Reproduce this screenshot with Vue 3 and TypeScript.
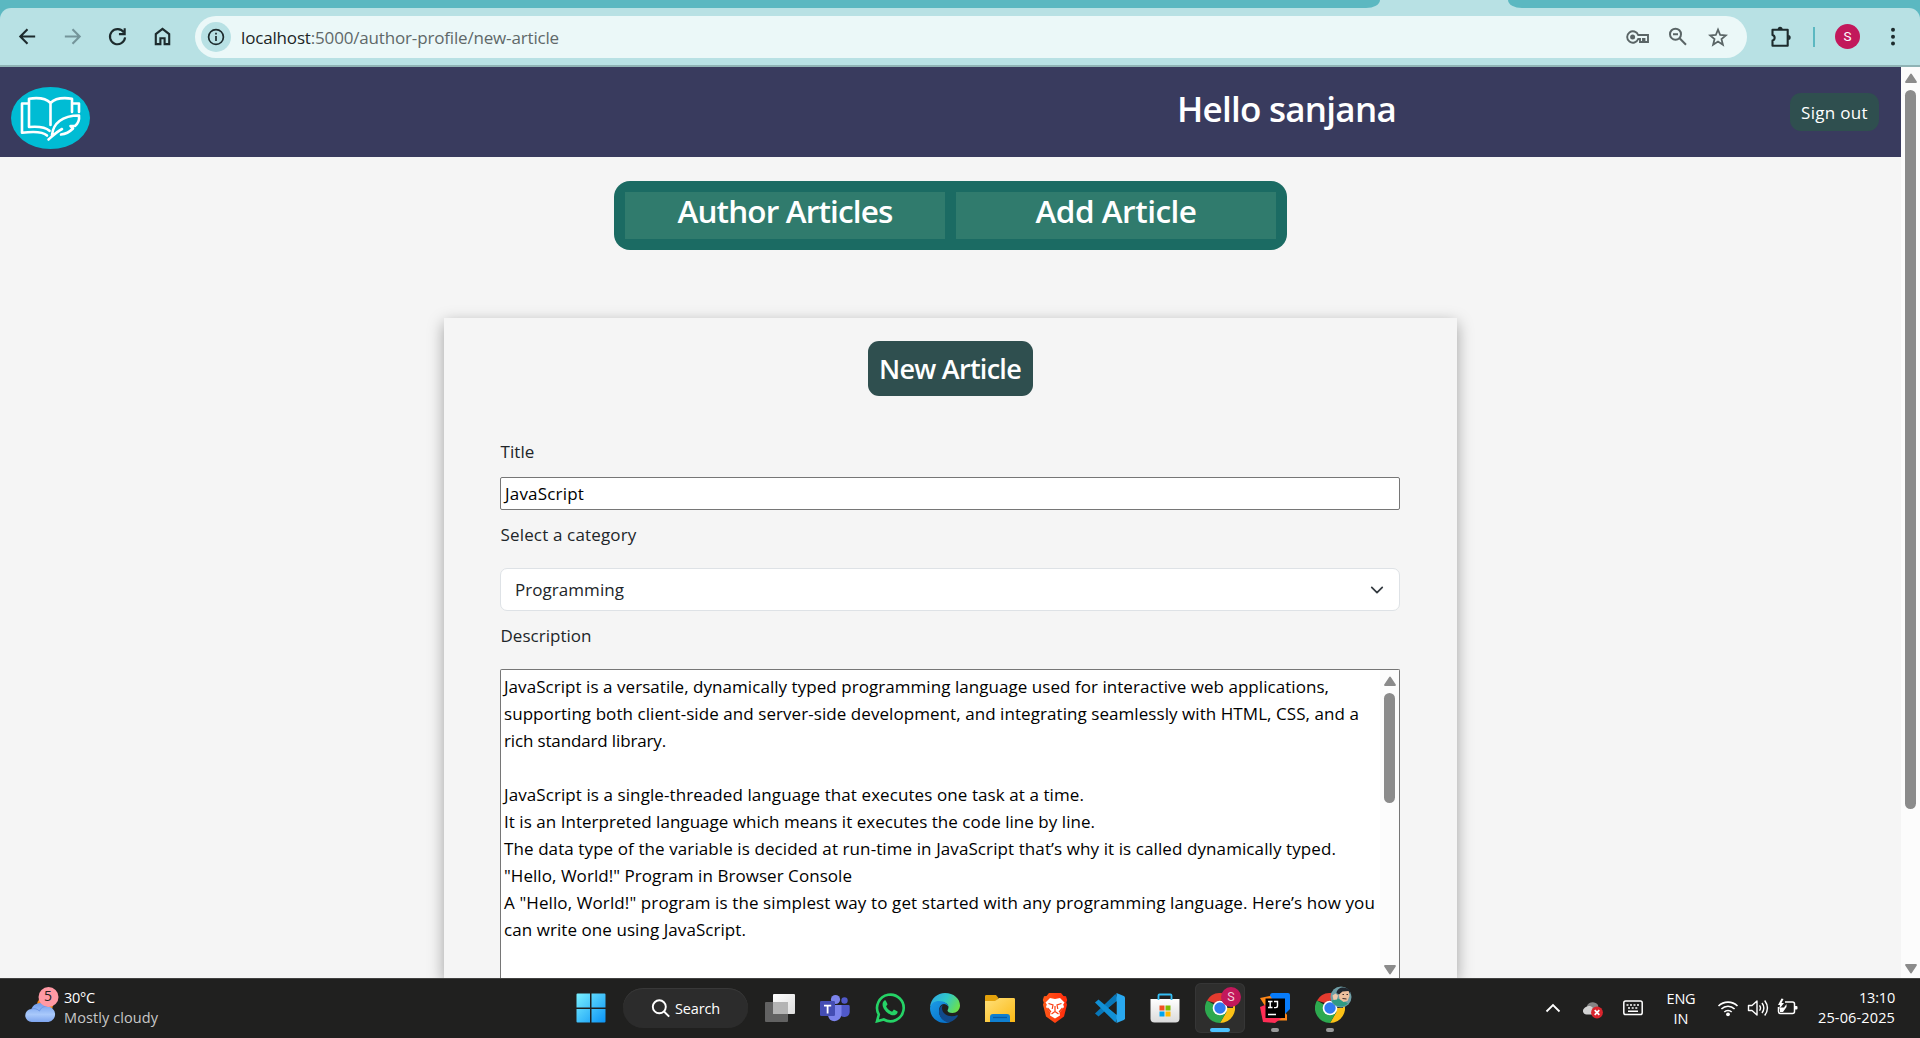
<script setup lang="ts">
import type { Directive } from 'vue'

interface Line {
  text: string
  width: number
}

// Tracks a run of text so that it fills the given width in pixels.
const vFit: Directive<HTMLElement, number> = {
  mounted(el, binding) {
    const count = (el.textContent ?? '').length
    const natural = el.getBoundingClientRect().width
    if (count > 1) el.style.letterSpacing = `${(binding.value - natural) / count}px`
  },
}

const lines: Line[] = [
  { text: 'JavaScript is a versatile, dynamically typed programming language used for interactive web applications,', width: 825 },
  { text: 'supporting both client-side and server-side development, and integrating seamlessly with HTML, CSS, and a', width: 855 },
  { text: 'rich standard library.', width: 162 },
  { text: '', width: 0 },
  { text: 'JavaScript is a single-threaded language that executes one task at a time.', width: 580 },
  { text: 'It is an Interpreted language which means it executes the code line by line.', width: 591 },
  { text: 'The data type of the variable is decided at run-time in JavaScript that’s why it is called dynamically typed.', width: 832 },
  { text: '"Hello, World!" Program in Browser Console', width: 348 },
  { text: 'A "Hello, World!" program is the simplest way to get started with any programming language. Here’s how you', width: 871 },
  { text: 'can write one using JavaScript.', width: 242 },
]
</script>

<template>
  <div class="screen">
    <div class="tabstrip">
      <div class="strip strip-left"></div>
      <div class="strip strip-right"></div>
    </div>

    <div class="toolbar">
      <svg class="nav-icon" viewBox="0 0 24 24"><path d="M20 12H5M12 4.500 4.500 12l7.500 7.500" /></svg>
      <svg class="nav-icon faded" viewBox="0 0 24 24"><path d="M4 12h15M12 4.500 19.500 12 12 19.500" /></svg>
      <svg class="nav-icon" viewBox="0 0 24 24"><path d="M18.600 7.800A7.900 7.900 0 1 0 19.900 13M19.500 3.500V9.500H13.500" /></svg>
      <svg class="nav-icon" viewBox="0 0 24 24"><path d="M5 20V9.500L12 4l7 5.500V20h-4.800v-6.200H9.800V20z" /></svg>
      <div class="omnibox">
        <div class="site-info">
          <svg width="18" height="18" viewBox="0 0 18 18" fill="none" stroke="#1d2b2d" stroke-width="1.700">
            <circle cx="9" cy="9" r="7.400" /><path d="M9 8v5M9 4.800v1.800" />
          </svg>
        </div>
        <span v-fit="318" class="url"><span class="host">localhost</span>:5000/author-profile/new-article</span>
        <div class="omni-icons">
          <svg width="24" height="18" viewBox="0 0 24 18" fill="none" stroke="#5a6566" stroke-width="1.900">
            <path d="M12.200 7H22v7h-3.500v-3h-1.500v3h-3v-3h-1.800A5.700 5.700 0 1 1 12.200 7z" />
            <circle cx="6.600" cy="9" r="2.500" fill="#5a6566" stroke="none" />
          </svg>
          <svg width="20" height="20" viewBox="0 0 20 20" fill="none" stroke="#5a6566" stroke-width="2">
            <circle cx="6.500" cy="7.200" r="5.500" /><path d="M10.600 11.300 17 17.800M4 7.200h5" />
          </svg>
          <svg width="20" height="20" viewBox="0 0 20 20" fill="none" stroke="#5a6566" stroke-width="1.800">
            <path d="m10 2.700 2.200 5.300 5.600.4-4.300 3.700 1.400 5.600-4.900-3.100-4.900 3.100 1.400-5.600L2.200 8.400 7.800 8z" />
          </svg>
        </div>
      </div>
      <svg class="puzzle" width="24" height="24" viewBox="0 0 24 24">
        <path d="M3.500 4.700h15.200v16H3.500v-5.200a2.900 2.900 0 0 0 0-5.600z" fill="none" stroke="#1d2b2d" stroke-width="2.100" stroke-linejoin="round" />
        <path d="M8.600 4.200a2.500 2.500 0 0 1 5 0zM19.200 10a2.500 2.500 0 0 1 0 5z" fill="#1d2b2d" />
      </svg>
      <div class="divider"></div>
      <div class="avatar">S</div>
      <svg class="more" width="6" height="22" viewBox="0 0 6 22" fill="#1d2b2d">
        <circle cx="3" cy="3.700" r="2" /><circle cx="3" cy="10.700" r="2" /><circle cx="3" cy="17.500" r="2" />
      </svg>
    </div>

    <div class="viewport">
      <div class="page">
        <header class="header">
          <svg class="logo" width="79" height="62" viewBox="0 0 79 62">
            <ellipse cx="39.500" cy="31" rx="39.500" ry="31" fill="#00bcd4" />
            <g fill="none" stroke="#fff" stroke-width="2.600" stroke-linecap="round" stroke-linejoin="round">
              <path d="M39.500 38V16c-4-4.200-12-5.700-21.500-4.300V40c9-.8 17 .6 20.500 3.800M39.500 16c4-4.200 12-5.700 21.500-4.300V25" />
              <path d="M17.500 16.500H11v29.300c12-1.600 21-1 25 2.700M61.500 16.500H68V25" />
              <path d="M37.500 52.500C43 47.500 45.500 45 51 42M41 48C42 36.500 51 28.500 68 28.500c.5 4-1 8-4 10.500h-4.500l2.500 2.500c-3 3-7 5.500-12 6" />
            </g>
          </svg>
          <h1 class="hello"><span v-fit="219">Hello sanjana</span></h1>
          <button class="sign-out"><span v-fit="67">Sign out</span></button>
        </header>

        <nav class="tabs">
          <a class="tab"><span v-fit="215">Author Articles</span></a>
          <a class="tab"><span v-fit="161">Add Article</span></a>
        </nav>

        <section class="card">
          <h2 class="card-title"><span v-fit="142">New Article</span></h2>
          <label class="label"><span v-fit="34">Title</span></label>
          <div class="input"><span v-fit="79">JavaScript</span></div>
          <label class="label label-category"><span v-fit="136">Select a category</span></label>
          <div class="select">
            <span v-fit="109">Programming</span>
            <svg width="18" height="14" viewBox="0 0 16 16" preserveAspectRatio="xMidYMid meet">
              <path d="m2 5 6 6 6-6" fill="none" stroke="#343a40" stroke-width="2" stroke-linecap="round" stroke-linejoin="round" />
            </svg>
          </div>
          <label class="label label-description"><span v-fit="91">Description</span></label>
          <div class="textarea">
            <div class="content">
              <p v-for="(line, i) in lines" :key="i" class="line"><span v-fit="line.width">{{ line.text }}</span></p>
            </div>
            <div class="inner-bar">
              <svg width="14" height="10" viewBox="0 0 14 10"><path d="M7 1.500 12 9H2z" fill="#8b8b8b" stroke="#8b8b8b" stroke-width="1.800" stroke-linejoin="round" /></svg>
              <div class="inner-thumb"></div>
              <svg class="down" width="14" height="10" viewBox="0 0 14 10"><path d="M7 8.500 12 1H2z" fill="#8b8b8b" stroke="#8b8b8b" stroke-width="1.800" stroke-linejoin="round" /></svg>
            </div>
          </div>
        </section>
      </div>

      <div class="page-bar">
        <svg width="14" height="10" viewBox="0 0 14 10"><path d="M7 1.500 12 9H2z" fill="#8b8b8b" stroke="#8b8b8b" stroke-width="1.800" stroke-linejoin="round" /></svg>
        <div class="page-thumb"></div>
        <svg class="down" width="14" height="10" viewBox="0 0 14 10"><path d="M7 8.500 12 1H2z" fill="#8b8b8b" stroke="#8b8b8b" stroke-width="1.800" stroke-linejoin="round" /></svg>
      </div>
    </div>

    <footer class="taskbar">
      <div class="weather">
        <svg width="36" height="38" viewBox="0 0 36 38">
          <defs>
            <linearGradient id="cloud" x1="0" y1="0" x2="0" y2="1"><stop offset="0" stop-color="#6f9bea" /><stop offset=".6" stop-color="#a9c9fb" /><stop offset="1" stop-color="#7ea5ee" /></linearGradient>
          </defs>
          <circle cx="21" cy="19" r="8" fill="#f58a1d" />
          <path d="M8 36a6.500 6.500 0 0 1-.5-13A9 9 0 0 1 23 20.500 7.800 7.800 0 0 1 24.500 36z" fill="url(#cloud)" />
          <path d="M7.500 23c3-1 6 0 8 2 1-3 4-5 7.500-4.500" fill="none" stroke="#6b95e4" stroke-width="1" />
          <circle cx="24.500" cy="11" r="10" fill="#ff99a4" />
        </svg>
        <span class="weather-count">5</span>
        <div class="weather-text">
          <div class="temp"><span v-fit="31">30°C</span></div>
          <div class="cond"><span v-fit="94">Mostly cloudy</span></div>
        </div>
      </div>

      <div class="apps">
        <div class="app">
          <svg viewBox="0 0 30 30">
            <defs><linearGradient id="win" x1="0" y1="0" x2="1" y2="1"><stop offset="0" stop-color="#7af0ff" /><stop offset="1" stop-color="#0a93f5" /></linearGradient></defs>
            <path d="M1.500.5H14v14H.5v-13a1 1 0 0 1 1-1zM15.500.5h13a1 1 0 0 1 1 1v13h-14zM.5 16H14v13.500H1.500a1 1 0 0 1-1-1zM15.500 16h14v12.500a1 1 0 0 1-1 1h-13z" fill="url(#win)" />
          </svg>
        </div>
        <div class="search">
          <svg width="19" height="19" viewBox="0 0 19 19" fill="none" stroke="#fff" stroke-width="1.900"><circle cx="8.300" cy="7.800" r="6.500" /><path d="m13 12.500 5.200 5.200" /></svg>
          <span v-fit="45">Search</span>
        </div>
        <div class="app">
          <svg viewBox="0 0 30 30">
            <defs><linearGradient id="tv" x1="0" y1="0" x2="1" y2="1"><stop offset="0" stop-color="#fff" /><stop offset="1" stop-color="#dcdcdc" /></linearGradient></defs>
            <rect y="9" width="23" height="20" rx="1" fill="#626262" /><rect x="8" y="1" width="22" height="20" rx="1" fill="url(#tv)" /><path d="M8 9h15v12H8z" fill="#b4b4b4" />
          </svg>
        </div>
        <div class="app">
          <svg viewBox="0 0 30 30">
            <circle cx="24.500" cy="7.500" r="3.200" fill="#5059c9" /><circle cx="15.500" cy="6.500" r="4.600" fill="#7b83eb" />
            <path d="M20 12h8.500a1.200 1.200 0 0 1 1.200 1.200v6A5.500 5.500 0 0 1 20 22z" fill="#5059c9" />
            <path d="M9 12h12.500v9a7.200 7.200 0 0 1-7 7.200C10 28 8 25 8 21z" fill="#7b83eb" />
            <rect y="8" width="15" height="15" rx="1.300" fill="#444db3" /><path d="M4 11.800h7.200v1.700H8.500v7H6.700v-7H4z" fill="#fff" />
          </svg>
        </div>
        <div class="app">
          <svg viewBox="0 0 30 30">
            <path d="M2 28.300 3.800 21.500A13.300 13.300 0 1 1 8.800 26.500z" fill="none" stroke="#25d366" stroke-width="2.600" />
            <path d="M10.800 7.800c-.6-.8-1.300-.6-2 .1-4 4.500 2.500 13.500 9.500 14.400 2.200.2 4.600-1.500 4.300-3.700l-3.700-2-1.800 2.100c-3-1-5-3-6-5.500l1.500-2z" fill="#25d366" />
          </svg>
        </div>
        <div class="app">
          <svg viewBox="0 0 30 30">
            <defs>
              <linearGradient id="edge1" x1="0" y1=".2" x2="1" y2=".6"><stop offset="0" stop-color="#2fa8e6" /><stop offset=".5" stop-color="#30c9c9" /><stop offset="1" stop-color="#6be04c" /></linearGradient>
              <linearGradient id="edge2" x1="0" y1="0" x2=".8" y2="1"><stop offset="0" stop-color="#1c9ce6" /><stop offset="1" stop-color="#0670c9" /></linearGradient>
            </defs>
            <path d="M0 14C.8 5.500 7.500 0 15 0c8.500 0 15 5.500 15 12.500 0 4.500-3.500 7.500-7.500 7.500-3.500 0-5-1.500-5-2.500 0-.8 1-1.300 1-3.500C18.500 10 12 8 7 9.500 3 10.500.5 13 0 14z" fill="url(#edge1)" />
            <path d="M0 15C.5 10.500 4.500 8 9 8c5.500 0 9.500 3 9.500 6 0 0-1.500-3-4.500-3s-5 3-5 7c0 6 5 11 11 11-2 .8-3.500 1-5 1C6.500 30 0 23.500 0 15z" fill="url(#edge2)" />
            <path d="M12.500 12c-2 1.500-3.500 3.500-3.500 6.500 0 6 5 11 10.500 10.800 3.500-1 6.500-3.500 8.300-6.300.3-.7-.3-1-1-.7C20 25 12 21.500 12 15z" fill="#114a8b" />
          </svg>
        </div>
        <div class="app">
          <svg viewBox="0 0 30 30">
            <defs><linearGradient id="fold" x1="0" y1="0" x2="1" y2="1"><stop offset="0" stop-color="#ffe07a" /><stop offset="1" stop-color="#fbb914" /></linearGradient></defs>
            <path d="M0 14V3.300A1.300 1.300 0 0 1 1.300 2H11l2.500 3L10 9z" fill="#e3a10b" /><path d="M0 8h10l4-3h14.700A1.300 1.300 0 0 1 30 6.300V29H0z" fill="url(#fold)" />
            <path d="M5 29v-5a3 3 0 0 1 3-3h14a3 3 0 0 1 3 3v5z" fill="#0f7fd0" /><path d="M8 24.500h14" stroke="#0759a3" stroke-width="1.300" />
          </svg>
        </div>
        <div class="app">
          <svg viewBox="0 0 30 30">
            <defs><linearGradient id="brave" x1="0" x2="1"><stop offset="0" stop-color="#ff5a18" /><stop offset="1" stop-color="#ff2a0b" /></linearGradient></defs>
            <path d="m9 0-2.500 3L4 3.200 2.800 7l.9 2.500-.7 2.300L6 23.500 15 30l9-6.500 3-11.700-.7-2.300.9-2.500L26 3.200 23.500 3 21 0z" fill="url(#brave)" />
            <path d="m10 5-4.500 4.500 1.300 2L6 14l4.500 5.500-.5 3L15 25.500l5-3-.5-3L24 14l-.8-2.500 1.300-2L20 5l-5 1z" fill="#fff" />
            <path d="m8.500 10.500 4.500 1.500-.8 4M21.500 10.500 17 12l.8 4M15 13v5.500m-3.500 2.500 3.500-2.500 3.500 2.500M7.500 15l3.500 4M22.500 15 19 19" fill="none" stroke="#fb3d12" stroke-width="1.200" />
          </svg>
        </div>
        <div class="app">
          <svg viewBox="0 0 30 30">
            <path d="M0 20.500 20.500 1 23 7 3.500 23.500z" fill="#0877b9" /><path d="M0 9.500 3.500 6.500 23 23l-2.500 6.500z" fill="#1190d6" />
            <path d="m21.500 0 7.300 3a2 2 0 0 1 1.200 1.800v20.400a2 2 0 0 1-1.200 1.800l-7.300 3V0z" fill="#29a8ef" /><path d="M21.500 8.500 13.500 15l8 6.500z" fill="#20201f" />
          </svg>
        </div>
        <div class="app">
          <svg viewBox="0 0 30 30">
            <defs><linearGradient id="store" x1="0" y1="0" x2="0" y2="1"><stop offset="0" stop-color="#fff" /><stop offset="1" stop-color="#dadada" /></linearGradient></defs>
            <path d="M.5 6h29v19.500a4 4 0 0 1-4 4h-21a4 4 0 0 1-4-4z" fill="url(#store)" />
            <path d="M8.500 7V2.500a1 1 0 0 1 1-1h11a1 1 0 0 1 1 1V7" fill="none" stroke="#35bdf3" stroke-width="1.800" />
            <path d="M9.500 12.500h5v5h-5z" fill="#f25022" /><path d="M15.500 12.500h5v5h-5z" fill="#7fba00" /><path d="M9.500 18.500h5v5h-5z" fill="#00a4ef" /><path d="M15.500 18.500h5v5h-5z" fill="#ffb900" />
          </svg>
        </div>
        <div class="app active">
          <svg viewBox="0 0 30 30">
            <path d="M15 15h13V7.500A15 15 0 0 1 15 30l6.500-11.200z" fill="#fbc116" /><path d="M15 15 2 7.500A15 15 0 0 0 15 30l6.500-11.200z" fill="#2da94f" />
            <path d="M2 7.500a15 15 0 0 1 26 0H15v4z" fill="#e33b2e" /><circle cx="15" cy="15" r="7.300" fill="#fff" /><circle cx="15" cy="15" r="5.700" fill="#2f7af0" />
          </svg>
          <span class="app-badge">S</span>
          <i class="indicator wide"></i>
        </div>
        <div class="app">
          <svg viewBox="0 0 30 30">
            <path d="m0 5 14-3 13 20v5.500H14z" fill="#ff8717" /><path d="M0 14l3 15 12 1 8-6-13-14z" fill="#ff2d55" /><path d="M10 2.500A2.500 2.500 0 0 1 12.500 0H28a2 2 0 0 1 2 2v14l-7 7z" fill="#087cfa" />
            <path d="M5.500 5.500H25V25H5.500z" fill="#000" /><path d="M8 8.500h4.500M10.200 8.500v6M8 14.500h4.500M14 8.500h3.500v4.300q0 1.800-1.800 1.800H14M8 21.500h8" fill="none" stroke="#fff" stroke-width="1.400" />
          </svg>
          <i class="indicator"></i>
        </div>
        <div class="app">
          <svg viewBox="0 0 30 30">
            <path d="M15 15h13V7.500A15 15 0 0 1 15 30l6.500-11.200z" fill="#fbc116" /><path d="M15 15 2 7.500A15 15 0 0 0 15 30l6.500-11.200z" fill="#2da94f" />
            <path d="M2 7.500a15 15 0 0 1 26 0H15v4z" fill="#e33b2e" /><circle cx="15" cy="15" r="7.300" fill="#fff" /><circle cx="15" cy="15" r="5.700" fill="#2f7af0" />
          </svg>
          <svg class="face" viewBox="0 0 22 22">
            <circle cx="11" cy="11" r="10.500" fill="#6f9ea6" />
            <path d="M1.500 15 6 12l6 2 6 3.500a10.500 10.500 0 0 1-16.500-2.500z" fill="#2f9a83" />
            <path d="M8 5.500 13 4l6 1 .5 5-2 5-4 1-4-3z" fill="#eebf9d" /><path d="M6.500 7C7 1 15-.5 20 4l.5 4.500-2-3.500-6 .5-3.500 3z" fill="#20262e" />
            <path d="m2.500 9.500 3-2 2.500 2-1 4-3.500.5z" fill="#efc8aa" /><path d="m12.500 12.500 4 .5M12.500 8.500h1.500M16.500 8.500H18" stroke="#3b2b2b" />
          </svg>
          <i class="indicator"></i>
        </div>
      </div>

      <div class="tray">
        <svg class="chev" width="16" height="10" viewBox="0 0 16 10" fill="none" stroke="#fff" stroke-width="1.800"><path d="m1.500 8.500 6.500-6.500 6.500 6.500" /></svg>
        <svg class="drive" width="22" height="18" viewBox="0 0 22 18">
          <path d="M5 5C6 1 13-.5 16 4l1 7H6z" fill="#858585" /><path d="M4.500 13.500C1 13 0 9.500 2 7.500 4 5 8 4 10.500 6.500L15 10v3.500z" fill="#d2d2d2" />
          <circle cx="15" cy="11.500" r="5.900" fill="#d9252d" /><path d="m12.700 9.200 4.600 4.600m0-4.600-4.600 4.600" stroke="#fff" stroke-width="1.700" />
        </svg>
        <svg class="kbd" width="20" height="16" viewBox="0 0 20 16" fill="none" stroke="#fff" stroke-width="1.500">
          <rect x=".8" y="1" width="18.400" height="13.500" rx="1.800" /><path d="M3.500 5h2M7 5h2M10.500 5h2M14 5h2M5 8h2M8.700 8h2M12.300 8h2M5 11.300h10" />
        </svg>
        <div class="lang"><div><span v-fit="29">ENG</span></div><div><span v-fit="15">IN</span></div></div>
        <svg class="wifi" width="22" height="18" viewBox="0 0 22 18" fill="none" stroke="#fff" stroke-width="1.600">
          <path d="M1.500 7a13.500 13.500 0 0 1 19 0M4.400 10a9.300 9.300 0 0 1 13.200 0M7.300 13a5.300 5.300 0 0 1 7.400 0" /><circle cx="11" cy="15.300" r="1.900" fill="#fff" stroke="none" />
        </svg>
        <svg class="vol" width="22" height="18" viewBox="0 0 22 18" fill="none" stroke="#fff" stroke-width="1.400" stroke-linejoin="round">
          <path d="M1.500 6.500v5H5l5 4.500V2L5 6.500zM12.500 6.300q2 2.700 0 5.400M15 4q3.700 5 0 10M17.700 1.500q5.500 7.500 0 15" />
        </svg>
        <svg class="bat" width="21" height="18" viewBox="0 0 21 18">
          <path d="M8 4h7.500a2 2 0 0 1 2 2v7.500a2 2 0 0 1-2 2h-12a2 2 0 0 1-2-2V9" fill="none" stroke="#fff" stroke-width="1.500" />
          <path d="M18 8h1.500a1 1 0 0 1 1 1v1.500a1 1 0 0 1-1 1H18zM3 14V9.500h4L9.500 6v3L6 14zM4.500.5 1 7h2l-1 4.500L7 5H4.500l2-4z" fill="#fff" />
        </svg>
        <div class="clock"><div><span v-fit="36">13:10</span></div><div><span v-fit="77">25-06-2025</span></div></div>
      </div>
    </footer>
  </div>
</template>

<style>
body { margin: 0; overflow: hidden; }
</style>

<style scoped>
* { box-sizing: border-box; }
.screen {
  width: 1920px; height: 1038px; overflow: hidden; display: flex; flex-direction: column;
  font-family: "Open Sans", "Noto Sans", sans-serif; font-size: 17px; background: #5bb8c1; color: #212529;
}
.screen span { white-space: pre; }
svg { display: block; flex: none; }

.tabstrip { height: 8px; display: flex; justify-content: space-between; background: #b8e1e4; flex: none; }
.strip { background: #5bb8c1; height: 8px; }
.strip-left { width: 1380px; border-bottom-right-radius: 14px 8px; }
.strip-right { width: 412px; border-bottom-left-radius: 14px 8px; }

.toolbar {
  height: 59px; flex: none; display: flex; align-items: center; padding-left: 16px;
  border-bottom: 2px solid #8fb3b5; border-radius: 11px 11px 0 0;
  background: #b8e1e4;
}
.nav-icon { width: 23px; height: 23px; margin-right: 22px; fill: none; stroke: #1d2b2d; stroke-width: 2.2; }
.nav-icon.faded { stroke: #74959a; }
.omnibox {
  width: 1552px; height: 42px; border-radius: 21px; background: #ebf8f8; margin-left: -1px;
  display: flex; align-items: center; padding-left: 6px; flex: none;
}
.site-info { width: 30px; height: 30px; border-radius: 50%; background: #b8e1e4; display: flex; align-items: center; justify-content: center; flex: none; }
.url { margin-left: 10px; color: #5f6869; line-height: 24px; padding-top: 2px; }
.host { color: #1c2526; }
.omni-icons { margin-left: auto; padding: 1px 19px 0 0; display: flex; align-items: center; gap: 19px; }
.puzzle { margin-left: 22px; }
.divider { width: 2px; height: 20px; background: #5bb8c1; margin-left: 20px; }
.avatar { width: 25px; height: 25px; border-radius: 50%; background: #c2185b; color: #fff; font: 13.5px/25px Roboto, sans-serif; text-align: center; margin-left: 20px; }
.more { margin-left: 30px; }

.viewport { flex: 1; min-height: 0; display: flex; }
.page { width: 1901px; display: flex; flex-direction: column; align-items: center; overflow: hidden; background: #f5f5f5; }
.header { width: 1901px; height: 90px; flex: none; background: #393b5e; display: flex; align-items: flex-start; }
.logo { margin: 20px 0 0 11px; }
.hello { margin: 18px 0 0 1087px; width: 222px; font-size: 35px; line-height: 48px; font-weight: 600; color: #fff; white-space: nowrap; }
.sign-out { margin: 26px 22px 0 auto; width: 89px; height: 38px; border: 0; padding: 1px 0 0; border-radius: 11px; background: #2f4f4f; color: #fff; font: inherit; line-height: 37px; }
.tabs { margin-top: 24px; width: 673px; height: 69px; flex: none; border-radius: 16px; background: #1b6b63; padding: 11px; display: flex; gap: 11px; }
.tab { flex: 1; background: #307b6d; color: #fff; font-size: 31.5px; font-weight: 600; line-height: 37px; text-align: center; }
.card { margin-top: 68px; width: 1013px; flex: 1; padding: 23px 57px 0 56px; box-shadow: rgba(0, 0, 0, 0.35) 0 5px 15px; display: flex; flex-direction: column; background: #f5f5f5; }
.card-title { margin: 0; align-self: center; width: 165px; height: 55px; flex: none; border-radius: 11px; background: #2f4f4f; color: #fff; font-size: 27px; line-height: 56px; font-weight: 600; text-align: center; white-space: nowrap; }
.label { display: block; line-height: 27px; height: 27px; margin-top: 42px; padding-left: 0.5px; }
.input { height: 33px; margin-top: 12px; border: 1px solid #767676; border-radius: 2px; background: #fff; color: #000; padding-left: 4px; line-height: 32px; flex: none; }
.label-category { margin-top: 11px; }
.select { height: 43px; margin-top: 20px; flex: none; border: 1px solid #dee2e6; border-radius: 7px; background: #fff; display: flex; justify-content: space-between; align-items: center; padding: 0 13px 0 14px; }
.label-description { margin-top: 11px; }
.textarea { flex: 1; min-height: 0; margin-top: 20px; border: 1px solid #767676; border-bottom: 0; border-radius: 2px 2px 0 0; background: #fff; color: #000; display: flex; }
.content { flex: 1; min-width: 0; padding: 3px 0 0 3px; }
.line { margin: 0; height: 27px; line-height: 27px; white-space: nowrap; }
.inner-bar { width: 19px; flex: none; background: #fcfcfc; display: flex; flex-direction: column; align-items: center; padding: 6px 0 3px; }
.inner-thumb { width: 11px; height: 110px; margin-top: 7px; border-radius: 6px; background: #8b8b8b; }
.down { margin-top: auto; }
.page-bar { width: 19px; flex: none; background: #fcfcfc; display: flex; flex-direction: column; align-items: center; padding: 6px 0 4px; }
.page-thumb { width: 11px; height: 719px; margin-top: 7px; border-radius: 6px; background: #8b8b8b; }

.taskbar { height: 60px; flex: none; display: flex; background: #20201f; border-top: 1px solid #414140; color: #fff; font-size: 14.5px; }
.weather { width: 566px; padding: 7px 0 0 24px; display: flex; position: relative; }
.weather-count { position: absolute; left: 44px; top: 7px; font-size: 14px; line-height: 20px; color: #222; }
.weather-text { margin-left: 4px; line-height: 20px; padding-top: 2px; }
.cond { color: #c8c8c8; }
.apps { display: flex; gap: 5px; padding-top: 4px; width: 789px; }
.app { width: 50px; height: 50px; border-radius: 6px; flex: none; display: flex; align-items: center; justify-content: center; position: relative; }
.app > svg { width: 30px; height: 30px; }
.app.active { background: #2e2e2d; box-shadow: inset 0 0 0 1px #363636; }
.search { width: 125px; height: 40px; margin: 5px 2px 0; border-radius: 20px; background: #2c2c2c; box-shadow: inset 0 1px 0 #383838; display: flex; align-items: center; padding-left: 28px; gap: 5px; }
.app-badge { position: absolute; left: 26px; top: 4px; width: 20px; height: 20px; border-radius: 50%; background: #c2185b; color: #f2cfdc; font: 12.5px/20px Roboto, sans-serif; text-align: center; }
.app > .face { position: absolute; left: 25px; top: 3px; width: 22px; height: 22px; }
.indicator { position: absolute; left: 21px; bottom: 1px; width: 8px; height: 4px; border-radius: 2px; background: #9a9a9a; }
.indicator.wide { left: 15px; width: 20px; background: #4cc2ff; }
.tray { flex: 1; display: flex; align-items: flex-start; padding-left: 190px; }
.chev { margin-top: 24px; }
.drive { margin: 22px 0 0 21px; }
.kbd { margin: 21px 0 0 19px; }
.lang { margin: 10px 0 0 22px; width: 32px; text-align: center; line-height: 20px; }
.wifi { margin: 20px 0 0 20px; }
.vol { margin: 20px 0 0 8px; }
.bat { margin: 19px 0 0 8px; }
.clock { margin: 9px 25px 0 auto; text-align: right; line-height: 20px; }
</style>
